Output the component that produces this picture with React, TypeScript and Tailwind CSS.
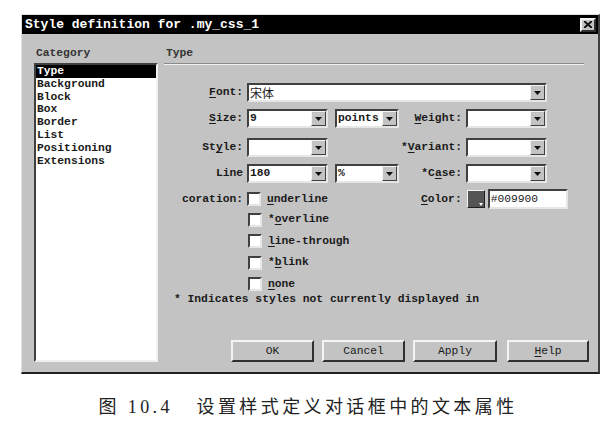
import type React from 'react'

const sunken =
	'border-2 border-t-[#404040] border-l-[#404040] border-b-[#e6e6e6] border-r-[#e6e6e6] bg-white'
const raised =
	'border-2 border-t-[#f4f4f4] border-l-[#f4f4f4] border-b-[#303030] border-r-[#303030] bg-[#c3c3c3]'

const Arrow = () => (
	<span className="flex h-full w-[15px] shrink-0 items-center justify-center border border-t-[#f4f4f4] border-l-[#f4f4f4] border-b-[#404040] border-r-[#404040] bg-[#c3c3c3]">
		<svg width="7" height="4" viewBox="0 0 7 4">
			<path d="M0 0h7L3.5 4z" fill="#111" />
		</svg>
	</span>
)

interface SelectProps {
	width: string
	value?: React.ReactNode
}

const Select: React.FC<SelectProps> = ({ width, value }) => (
	<div className={`flex h-[19px] shrink-0 items-stretch ${width} ${sunken}`}>
		<span className="flex-1 overflow-hidden pl-[1px] leading-[15px]">{value}</span>
		<Arrow />
	</div>
)

const Check: React.FC<{ children: React.ReactNode }> = ({ children }) => (
	<div className="flex items-center gap-[6px]">
		<span className={`h-[14px] w-[14px] ${sunken}`} />
		<span>{children}</span>
	</div>
)

const U: React.FC<{ children: React.ReactNode }> = ({ children }) => (
	<span className="underline underline-offset-2">{children}</span>
)

const categories = [
	'Type',
	'Background',
	'Block',
	'Box',
	'Border',
	'List',
	'Positioning',
	'Extensions',
]

const Label: React.FC<{ children: React.ReactNode; width: string }> = ({ children, width }) => (
	<span className={`flex shrink-0 justify-end pr-[4px] ${width}`}>{children}</span>
)

export default function App() {
	return (
		<div
			className="h-[422px] w-[616px] overflow-hidden bg-white pt-[14px] text-[11.3px] text-[#1a1a1a]"
			style={{ fontFamily: '"Liberation Mono", monospace' }}
		>
			<div className="ml-[21px] flex h-[360px] w-[579px] flex-col border-l border-t border-r-2 border-b-2 border-l-[#e0e0e0] border-t-[#e0e0e0] border-r-[#404040] border-b-[#202020] bg-[#c3c3c3]">
				{/* title bar */}
				<div className="flex h-[19px] items-center justify-between bg-black pl-[3px] pr-[2px]">
					<span className="text-[13px] font-bold leading-none text-white">
						Style definition for .my_css_1
					</span>
					<span className={`flex h-[14px] w-[16px] items-center justify-center ${raised} border`}>
						<svg width="8" height="7" viewBox="0 0 8 7">
							<path d="M0 0L8 7M8 0L0 7" stroke="#111" strokeWidth="2" />
						</svg>
					</span>
				</div>

				<div className="flex flex-1 pb-[10px] pl-[12px] pr-[8px] pt-[14px] font-bold">
					{/* category */}
					<div className="flex w-[124px] shrink-0 flex-col">
						<div className="h-[15px] pl-[2px] leading-[11px] text-[#333]">Category</div>
						<div className={`flex-1 ${sunken} border-r-[#f0f0f0] border-b-[#f0f0f0]`}>
							{categories.map((c, i) => (
								<div
									key={c}
									className={`h-[12.8px] pl-[1px] leading-[12.8px] ${i === 0 ? 'bg-black text-white' : ''}`}
								>
									{c}
								</div>
							))}
						</div>
					</div>

					{/* type panel */}
					<div className="ml-[6px] flex min-w-0 flex-1 flex-col">
						<div className="h-[15px] pl-[2px] leading-[11px] text-[#333]">Type</div>
						<div className="mr-[6px] h-[2px] border-t border-b border-t-[#8a8a8a] border-b-[#f0f0f0]" />

						<div className="mt-[18px] flex h-[19px] items-center">
							<Label width="w-[83px]">
								<span>
									<U>F</U>ont:
								</span>
							</Label>
							<div className={`flex h-[19px] w-[300px] shrink-0 items-stretch ${sunken}`}>
								<span
									className="flex-1 pl-[1px] text-[12px] font-normal leading-[15px]"
									style={{ fontFamily: '"Noto Sans CJK SC", sans-serif' }}
								>
									宋体
								</span>
								<Arrow />
							</div>
						</div>

						<div className="mt-[7px] flex h-[19px] items-center">
							<Label width="w-[83px]">
								<span>
									<U>S</U>ize:
								</span>
							</Label>
							<Select width="w-[81px]" value="9" />
							<span className="w-[7px] shrink-0" />
							<Select width="w-[64px]" value="points" />
							<Label width="w-[67px]">
								<span>
									<U>W</U>eight:
								</span>
							</Label>
							<Select width="w-[81px]" />
						</div>

						<div className="mt-[10px] flex h-[19px] items-center">
							<Label width="w-[83px]">
								<span>
									St<U>y</U>le:
								</span>
							</Label>
							<Select width="w-[81px]" />
							<span className="w-[71px] shrink-0" />
							<Label width="w-[67px]">
								<span>
									*<U>V</U>ariant:
								</span>
							</Label>
							<Select width="w-[81px]" />
						</div>

						<div className="mt-[7px] flex h-[19px] items-center">
							<Label width="w-[83px]">Line</Label>
							<Select width="w-[81px]" value="180" />
							<span className="w-[7px] shrink-0" />
							<Select width="w-[64px]" value="%" />
							<Label width="w-[67px]">
								<span>
									*C<U>a</U>se:
								</span>
							</Label>
							<Select width="w-[81px]" />
						</div>

						<div className="mt-[6px] flex h-[20px] items-center">
							<Label width="w-[83px]">
								<span className="whitespace-nowrap">coration:</span>
							</Label>
							<div className="w-[174px] shrink-0">
								<Check>
									<U>u</U>nderline
								</Check>
							</div>
							<span>
								<U>C</U>olor:
							</span>
							<span className="relative ml-[5px] h-[18px] w-[18px] shrink-0 border border-t-[#f4f4f4] border-l-[#f4f4f4] border-b-[#202020] border-r-[#202020] bg-[#555]">
								<svg className="absolute bottom-[1px] right-[1px]" width="4" height="3" viewBox="0 0 4 3">
									<path d="M0 0h4L2 3z" fill="#fff" />
								</svg>
							</span>
							<div className={`ml-[3px] h-[20px] w-[80px] shrink-0 ${sunken} pl-[1px] font-normal leading-[16px]`}>
								#009900
							</div>
						</div>

						<div className="pl-[84px]">
							<div className="flex h-[21.5px] items-center">
								<Check>
									*<U>o</U>verline
								</Check>
							</div>
							<div className="flex h-[21.5px] items-center">
								<Check>
									<U>l</U>ine-through
								</Check>
							</div>
							<div className="flex h-[21.5px] items-center">
								<Check>
									*<U>b</U>link
								</Check>
							</div>
							<div className="flex h-[21.5px] items-center">
								<Check>
									<U>n</U>one
								</Check>
							</div>
						</div>

						<div className="mt-[-2px] whitespace-nowrap pl-[10px] leading-[12px]">
							* Indicates styles not currently displayed in
						</div>

						<div className="mt-auto flex h-[22px] pl-[67px] font-normal">
							<button type="button" className={`w-[83px] shrink-0 ${raised} border-l-[#202020] border-t-[#202020]`}>
								OK
							</button>
							<button type="button" className={`ml-[8px] w-[83px] shrink-0 ${raised}`}>
								Cancel
							</button>
							<button type="button" className={`ml-[8px] w-[84px] shrink-0 ${raised}`}>
								Apply
							</button>
							<button type="button" className={`ml-[10px] w-[82px] shrink-0 ${raised}`}>
								<U>H</U>elp
							</button>
						</div>
					</div>
				</div>
			</div>

			<div
				className="mt-[22px] text-center text-[18px] leading-[22px] tracking-[3.4px] text-[#222]"
				style={{ fontFamily: '"Liberation Serif", "Noto Sans CJK SC", serif' }}
			>
				图 10.4&nbsp;&nbsp; 设置样式定义对话框中的文本属性
			</div>
		</div>
	)
}
